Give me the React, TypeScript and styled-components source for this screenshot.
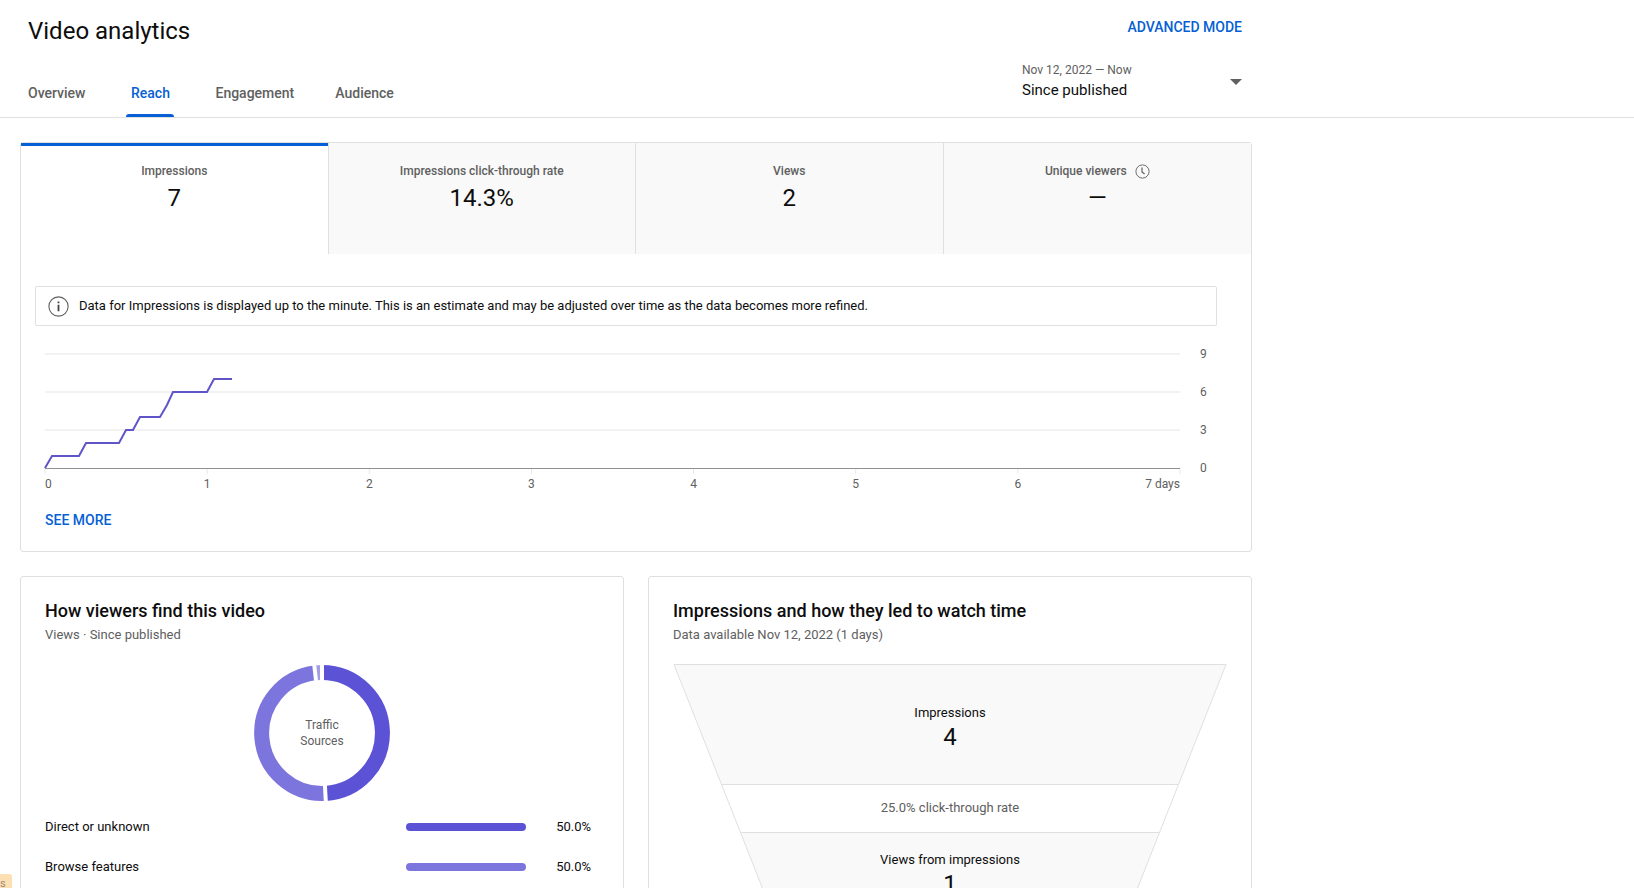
import React from "react";
import styled, { createGlobalStyle } from "styled-components";

const BLUE = "#065fd4";
const INK = "#0d0d0d";
const MUTED = "#606060";
const LINE = "#e0e0e0";

const GlobalStyle = createGlobalStyle`
  *, *::before, *::after { box-sizing: border-box; }
  body {
    margin: 0;
    background: #fff;
    color: ${INK};
    font-family: Roboto, "Liberation Sans", sans-serif;
    font-size: 13px;
    line-height: 16px;
  }
  h1, h2, p { margin: 0; font-weight: 400; }
  button, select { font: inherit; color: inherit; background: none; border: 0; padding: 0; margin: 0; cursor: pointer; }
`;

const Page = styled.div`
  height: 100vh;
  overflow-x: hidden;
  overflow-y: auto;
  scrollbar-width: none;
`;

const Header = styled.header`
  border-bottom: 1px solid ${LINE};
`;

const HeaderInner = styled.div`
  display: flex;
  justify-content: space-between;
  max-width: 1252px;
  padding: 15px 10px 0 28px;
`;

const Title = styled.h1`
  font-size: 24px;
  line-height: 32px;
  margin-bottom: 22px;
`;

const Tabs = styled.nav`
  display: flex;
  gap: 41px;
`;

const Tab = styled.button<{ $active?: boolean }>`
  position: relative;
  height: 48px;
  min-width: 48px;
  font-size: 14px;
  font-weight: 500;
  color: ${(p) => (p.$active ? BLUE : MUTED)};
  &::after {
    content: "";
    display: ${(p) => (p.$active ? "block" : "none")};
    position: absolute;
    left: 0;
    right: 0;
    bottom: 0;
    height: 3px;
    border-radius: 3px 3px 0 0;
    background: ${BLUE};
  }
`;

const HeaderSide = styled.div`
  display: flex;
  flex-direction: column;
  width: 220px;
`;

const TextButton = styled.button`
  font-size: 14px;
  font-weight: 500;
  line-height: 24px;
  color: ${BLUE};
  text-transform: uppercase;
`;

const AdvancedButton = styled(TextButton)`
  align-self: flex-end;
  margin-bottom: 23px;
`;

const Period = styled.label`
  display: grid;
  grid-template-columns: 1fr 12px;
  align-items: center;
`;

const PeriodDates = styled.span`
  font-size: 12px;
  color: ${MUTED};
`;

const PeriodSelect = styled.select`
  grid-row: 2;
  grid-column: 1 / -1;
  appearance: none;
  font-size: 15px;
  line-height: 24px;
`;

const Arrow = styled.svg`
  grid-column: 2;
  grid-row: 1 / span 2;
  pointer-events: none;
`;

const Main = styled.main`
  display: grid;
  grid-template-columns: 1fr 1fr;
  gap: 24px;
  max-width: 1272px;
  padding: 24px 20px;
`;

const Card = styled.section<{ $wide?: boolean }>`
  min-width: 0;
  border: 1px solid ${LINE};
  border-radius: 3px;
  grid-column: ${(p) => (p.$wide ? "1 / -1" : "auto")};
  padding: ${(p) => (p.$wide ? "0" : "20px 24px 24px")};
`;

const Metrics = styled.div`
  display: grid;
  grid-template-columns: repeat(4, 1fr);
`;

const Metric = styled.button<{ $active?: boolean }>`
  display: flex;
  flex-direction: column;
  align-items: center;
  gap: 3px;
  height: 111px;
  padding-top: 17px;
  background: ${(p) => (p.$active ? "#fff" : "#f9f9f9")};
  box-shadow: ${(p) => (p.$active ? `inset 0 3px ${BLUE}` : "none")};
  padding-top: 20px;
  &:not(:last-child) { border-right: 1px solid ${LINE}; }
`;

const MetricLabel = styled.span`
  display: flex;
  align-items: center;
  gap: 8px;
  font-size: 12px;
  font-weight: 500;
  color: ${MUTED};
`;

const Figure = styled.span`
  font-size: 24px;
  line-height: 32px;
`;

const Notice = styled.p`
  display: flex;
  align-items: center;
  gap: 10px;
  min-height: 40px;
  margin: 32px 34px 20px 14px;
  padding: 0 12px;
  border: 1px solid ${LINE};
  border-radius: 2px;
`;

const Chart = styled.div`
  display: grid;
  grid-template-columns: 1fr 8px;
  column-gap: 20px;
  margin: 0 43px 0 24px;
  font-size: 12px;
  color: ${MUTED};
`;

const Plot = styled.svg`
  display: block;
  width: 100%;
  height: 122px;
  margin-top: 8px;
  overflow: visible;
`;

const YAxis = styled.div`
  display: flex;
  flex-direction: column;
  justify-content: space-between;
  height: 130px;
`;

const XAxis = styled.div`
  display: grid;
  grid-template-columns: repeat(14, 1fr);
  white-space: nowrap;
`;

const XLabel = styled.span`
  grid-column: span 2;
  text-align: center;
  &:first-child { grid-column: span 1; text-align: left; }
  &:last-child { grid-column: span 1; justify-self: end; }
`;

const CardFooter = styled.div`
  padding: 16px 24px 19px;
`;

const CardTitle = styled.h2`
  font-size: 18px;
  font-weight: 500;
  line-height: 28px;
`;

const CardSubtitle = styled.p`
  line-height: 20px;
  color: ${MUTED};
`;

const Donut = styled.div`
  display: grid;
  place-items: center;
  margin: 20px 0 6px;
  font-size: 12px;
  text-align: center;
  color: ${MUTED};
  & > * { grid-area: 1 / 1; }
`;

const DonutLabel = styled.span`
  width: 60px;
`;

const Sources = styled.table`
  width: 100%;
  border-collapse: collapse;
  th, td { height: 40px; padding: 0; font-weight: 400; text-align: left; }
  td:last-child { width: 42px; padding-right: 8px; text-align: right; }
`;

const BarCell = styled.td`
  width: 150px;
`;

const Bar = styled.div<{ $color: string }>`
  width: 120px;
  height: 8px;
  border-radius: 4px;
  background: ${(p) => p.$color};
`;

const Funnel = styled.div`
  display: grid;
  margin-top: 19px;
  & > * { grid-area: 1 / 1; }
`;

const FunnelShape = styled.svg`
  display: block;
  width: 100%;
  height: 264px;
`;

const FunnelSteps = styled.div`
  display: grid;
  grid-template-rows: 120px 48px 96px;
  text-align: center;
`;

const FunnelStep = styled.div<{ $top: number; $muted?: boolean }>`
  display: flex;
  flex-direction: column;
  align-items: center;
  padding-top: ${(p) => p.$top}px;
  color: ${(p) => (p.$muted ? MUTED : INK)};
`;

const FeedbackTag = styled.button`
  position: fixed;
  left: 0;
  bottom: 0;
  width: 12px;
  height: 14px;
  border-radius: 0 3px 0 0;
  background: #fddfb4;
  color: #9a8a78;
  font-size: 11px;
  line-height: 20px;
  text-align: left;
  overflow: hidden;
`;

const tabs = ["Overview", "Reach", "Engagement", "Audience"];

const metrics = [
  { label: "Impressions", value: "7" },
  { label: "Impressions click-through rate", value: "14.3%" },
  { label: "Views", value: "2" },
  { label: "Unique viewers", value: "—", pending: true },
];

const sources = [
  { name: "Direct or unknown", share: "50.0%", color: "#5b52d6" },
  { name: "Browse features", share: "50.0%", color: "#7c75de" },
];

const gridLines = [0, 38, 76];
const ticks = [0, 1, 2, 3, 4, 5, 6, 7];
const impressions =
  "0,114 7,102 34,102 41,89 74,89 81,76 88,76 95,63 115,63 122,51 128,38 162,38 169,25 187,25";

const ClockIcon = () => (
  <svg width="15" height="15" viewBox="0 0 15 15" fill="none" stroke={MUTED} aria-hidden="true">
    <circle cx="7.5" cy="7.5" r="6.6" strokeWidth="0.9" />
    <path d="M7 3.500v4.400l2.600 2.100" strokeWidth="1.2" />
  </svg>
);

const InfoIcon = () => (
  <svg width="21" height="21" viewBox="0 0 21 21" aria-hidden="true">
    <circle cx="10.5" cy="10.5" r="9.6" fill="none" stroke={MUTED} strokeWidth="1.1" />
    <path d="M9.6 5.500h1.800v1.800H9.600zM9.600 8.700h1.800v6.600H9.600z" fill="#444" />
  </svg>
);

const ImpressionsChart = () => (
  <Chart>
    <Plot viewBox="0 0 1135 122" preserveAspectRatio="none" role="img" aria-label="Impressions over 7 days">
      {gridLines.map((y) => (
        <line key={y} x1="0" x2="1135" y1={y} y2={y} stroke="#f2f2f2" strokeWidth="2" />
      ))}
      {ticks.map((t) => (
        <line key={t} x1={(t * 1135) / 7} x2={(t * 1135) / 7} y1="114" y2="120" stroke="#e8e8e8" />
      ))}
      <rect x="0" y="114" width="1135" height="1" fill="#909090" shapeRendering="crispEdges" />
      <polyline points={impressions} fill="none" stroke="#5f55c9" strokeWidth="2" vectorEffect="non-scaling-stroke" />
    </Plot>
    <YAxis>
      {[9, 6, 3, 0].map((n) => (
        <span key={n}>{n}</span>
      ))}
    </YAxis>
    <XAxis>
      {ticks.map((t) => (
        <XLabel key={t}>{t === 7 ? "7 days" : t}</XLabel>
      ))}
    </XAxis>
  </Chart>
);

const TrafficDonut = () => (
  <Donut>
    <svg width="136" height="136" viewBox="-68 -68 136 136" fill="none" strokeWidth="15" aria-hidden="true">
      <path d="M0-60.500A60.500 60.500 0 0 1 3.400 60.400" stroke="#5b52d6" />
      <path d="M3.400 60.400A60.500 60.500 0 0 1-6.900-60.100" stroke="#7c75de" />
      <path d="M-6.900-60.100A60.500 60.500 0 0 1 0-60.500" stroke="#a29de6" />
      <path d="M0-50V-70M2.800 50 3.900 70M-5.700-50-8-70" stroke="#fff" strokeWidth="4" />
    </svg>
    <DonutLabel>Traffic Sources</DonutLabel>
  </Donut>
);

export default function App() {
  return (
    <Page>
      <GlobalStyle />
      <Header>
        <HeaderInner>
          <div>
            <Title>Video analytics</Title>
            <Tabs>
              {tabs.map((t) => (
                <Tab key={t} $active={t === "Reach"}>{t}</Tab>
              ))}
            </Tabs>
          </div>
          <HeaderSide>
            <AdvancedButton>Advanced mode</AdvancedButton>
            <Period htmlFor="period">
              <PeriodDates>Nov 12, 2022 — Now</PeriodDates>
              <PeriodSelect id="period" defaultValue="since">
                <option value="since">Since published</option>
              </PeriodSelect>
              <Arrow width="12" height="6" viewBox="0 0 12 6" aria-hidden="true">
                <path d="M0 0h12L6 6z" fill={MUTED} />
              </Arrow>
            </Period>
          </HeaderSide>
        </HeaderInner>
      </Header>

      <Main>
        <Card $wide>
          <Metrics>
            {metrics.map((m, i) => (
              <Metric key={m.label} $active={i === 0}>
                <MetricLabel>
                  {m.label}
                  {m.pending && <ClockIcon />}
                </MetricLabel>
                <Figure>{m.value}</Figure>
              </Metric>
            ))}
          </Metrics>
          <Notice>
            <InfoIcon />
            Data for Impressions is displayed up to the minute. This is an estimate and may be adjusted over time as the data becomes more refined.
          </Notice>
          <ImpressionsChart />
          <CardFooter>
            <TextButton>See more</TextButton>
          </CardFooter>
        </Card>

        <Card>
          <CardTitle>How viewers find this video</CardTitle>
          <CardSubtitle>Views · Since published</CardSubtitle>
          <TrafficDonut />
          <Sources>
            <tbody>
              {sources.map((s) => (
                <tr key={s.name}>
                  <th scope="row">{s.name}</th>
                  <BarCell><Bar $color={s.color} /></BarCell>
                  <td>{s.share}</td>
                </tr>
              ))}
            </tbody>
          </Sources>
        </Card>

        <Card>
          <CardTitle>Impressions and how they led to watch time</CardTitle>
          <CardSubtitle>Data available Nov 12, 2022 (1 days)</CardSubtitle>
          <Funnel>
            <FunnelShape viewBox="0 0 554 264" preserveAspectRatio="none" stroke={LINE} aria-hidden="true">
              <path d="M1 .500h552L505.500 120.500H48.500z" fill="#f9f9f9" />
              <path d="M48.500 120.500H505.500L486.500 168.500H67.500z" fill="#fff" />
              <path d="M67.500 168.500H486.500L449 263.500H105z" fill="#f9f9f9" />
            </FunnelShape>
            <FunnelSteps>
              <FunnelStep $top={41}>
                <span>Impressions</span>
                <Figure>4</Figure>
              </FunnelStep>
              <FunnelStep $top={16} $muted>25.0% click-through rate</FunnelStep>
              <FunnelStep $top={20}>
                <span>Views from impressions</span>
                <Figure>1</Figure>
              </FunnelStep>
            </FunnelSteps>
          </Funnel>
        </Card>
      </Main>
      <FeedbackTag aria-label="Suggestions">s</FeedbackTag>
    </Page>
  );
}
